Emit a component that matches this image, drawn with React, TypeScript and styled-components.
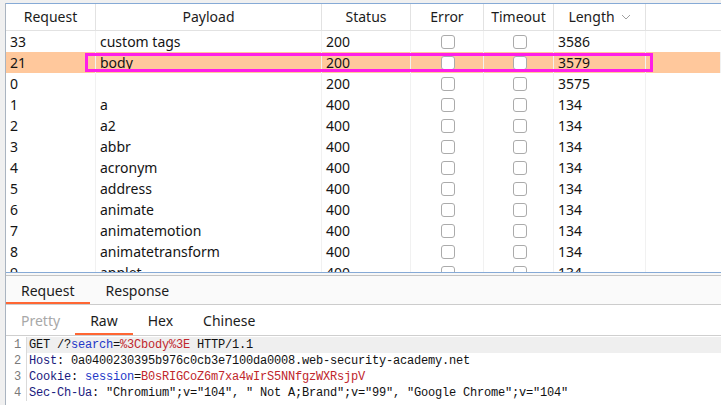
import React from "react";
import styled, { createGlobalStyle } from "styled-components";

const Global = createGlobalStyle`
  html, body { margin: 0; padding: 0; }
  body {
    background: #f0f0f0;
    font-family: "Noto Sans", "Liberation Sans", sans-serif;
    overflow: hidden;
  }
  * { box-sizing: border-box; }
`;

const Page = styled.div`
  width: 721px;
  height: 405px;
  padding: 3px 0 0 5px;
  display: flex;
  flex-direction: column;
`;

const Frame = styled.div`
  flex: 1;
  display: flex;
  flex-direction: column;
  border-left: 1px solid #aab4c0;
  background: #ffffff;
  min-height: 0;
`;

const TablePanel = styled.div`
  height: 270px;
  border-top: 1px solid #86aad6;
  border-bottom: 1px solid #86aad6;
  display: flex;
  flex-direction: column;
  overflow: hidden;
`;

const cols = "90px 226px 89px 73px 70px 92px 1fr";

const HeaderRow = styled.div`
  display: grid;
  grid-template-columns: ${cols};
  height: 27px;
  border-bottom: 1px solid #e2e2e2;
  flex-shrink: 0;
`;

const HeadCell = styled.div`
  border-right: 1px solid #e2e2e2;
  display: flex;
  align-items: center;
  justify-content: center;
  gap: 6px;
  font-size: 14px;
  color: #1c1c1c;
  line-height: 26px;
  &:last-child { border-right: none; }
`;

const Body = styled.div`
  flex: 1;
  overflow: hidden;
`;

const Row = styled.div<{ $hl?: boolean }>`
  position: relative;
  display: grid;
  grid-template-columns: ${cols};
  height: 21px;
  background: ${(p) => (p.$hl ? "#ffc89c" : "transparent")};
`;

const Cell = styled.div<{ $center?: boolean }>`
  border-right: 1px solid #f1f1f1;
  padding-left: 4px;
  font-size: 14px;
  line-height: 21px;
  color: #141414;
  white-space: nowrap;
  overflow: hidden;
  display: flex;
  align-items: center;
  justify-content: ${(p) => (p.$center ? "center" : "flex-start")};
  padding-left: ${(p) => (p.$center ? "0" : "4px")};
  &:last-child { border-right: none; }
`;

const Check = styled.span`
  display: inline-block;
  width: 14px;
  height: 14px;
  border: 1px solid #ababab;
  border-radius: 3px;
  background: #ffffff;
  margin-left: 2px;
`;

const Marker = styled.div`
  position: absolute;
  left: 79px;
  top: 1px;
  width: 568px;
  height: 19px;
  border: 3px solid #ff1ee8;
  pointer-events: none;
`;

const Gap = styled.div`
  height: 2px;
  background: #f7f7f7;
  flex-shrink: 0;
`;

const TabBar = styled.div`
  display: flex;
  height: 30px;
  background: #fafafa;
  border-top: 1px solid #c4c4c4;
  border-bottom: 1px solid #cccccc;
  flex-shrink: 0;
`;

const Tab = styled.div<{ $active?: boolean; $dim?: boolean; $pad: number }>`
  padding: 0 ${(p) => p.$pad}px;
  font-size: 14px;
  color: ${(p) => (p.$dim ? "#a8a8a8" : "#1c1c1c")};
  display: flex;
  align-items: center;
  border-bottom: 2px solid ${(p) => (p.$active ? "#ff6633" : "transparent")};
  padding-top: 2px;
`;

const SubBar = styled.div`
  display: flex;
  height: 31px;
  background: #ffffff;
  border-bottom: 1px solid #cfcfcf;
  flex-shrink: 0;
`;

const Code = styled.div`
  flex: 1;
  padding-top: 1px;
  font-family: "Liberation Mono", "DejaVu Sans Mono", monospace;
  font-size: 12px;
  letter-spacing: -0.2px;
  overflow: hidden;
`;

const Line = styled.div<{ $hl?: boolean }>`
  display: flex;
  height: 16px;
  line-height: 16px;
`;

const Num = styled.div`
  width: 21px;
  flex-shrink: 0;
  border-right: 1px solid #dadada;
  text-align: right;
  padding-right: 5px;
  color: #7a7a7a;
  background: #ffffff;
`;

const Text = styled.div<{ $hl?: boolean }>`
  flex: 1;
  padding-left: 2px;
  white-space: pre;
  color: #111111;
  background: ${(p) => (p.$hl ? "#efefef" : "#ffffff")};
`;

const HName = styled.span`color: #1a1a7e;`;
const PName = styled.span`color: #2438c8;`;
const PVal = styled.span`color: #c0262c;`;

const Chevron = () => (
  <svg width="10" height="6" viewBox="0 0 10 6">
    <path d="M1 1 L5 5 L9 1" fill="none" stroke="#a0a0a0" strokeWidth="1" />
  </svg>
);

const rows: [string, string, string, string][] = [
  ["33", "custom tags", "200", "3586"],
  ["21", "body", "200", "3579"],
  ["0", "", "200", "3575"],
  ["1", "a", "400", "134"],
  ["2", "a2", "400", "134"],
  ["3", "abbr", "400", "134"],
  ["4", "acronym", "400", "134"],
  ["5", "address", "400", "134"],
  ["6", "animate", "400", "134"],
  ["7", "animatemotion", "400", "134"],
  ["8", "animatetransform", "400", "134"],
  ["9", "applet", "400", "134"],
];

export default function App() {
  return (
    <>
      <Global />
      <Page>
        <Frame>
          <TablePanel>
            <HeaderRow>
              <HeadCell>Request</HeadCell>
              <HeadCell>Payload</HeadCell>
              <HeadCell>Status</HeadCell>
              <HeadCell>Error</HeadCell>
              <HeadCell>Timeout</HeadCell>
              <HeadCell>
                Length <Chevron />
              </HeadCell>
              <HeadCell />
            </HeaderRow>
            <Body>
              {rows.map((r, i) => (
                <Row key={i} $hl={i === 1}>
                  <Cell>{r[0]}</Cell>
                  <Cell>{r[1]}</Cell>
                  <Cell>{r[2]}</Cell>
                  <Cell $center>
                    <Check />
                  </Cell>
                  <Cell $center>
                    <Check />
                  </Cell>
                  <Cell>{r[3]}</Cell>
                  <Cell />
                  {i === 1 && <Marker />}
                </Row>
              ))}
            </Body>
          </TablePanel>
          <Gap />
          <TabBar>
            <Tab $active $pad={15}>Request</Tab>
            <Tab $pad={16}>Response</Tab>
          </TabBar>
          <SubBar>
            <Tab $dim $pad={15}>Pretty</Tab>
            <Tab $active $pad={15}>Raw</Tab>
            <Tab $pad={15}>Hex</Tab>
            <Tab $pad={15}>Chinese</Tab>
          </SubBar>
          <Code>
            <Line>
              <Num>1</Num>
              <Text $hl>
                GET /?<PName>search</PName>=<PVal>%3Cbody%3E</PVal> HTTP/1.1
              </Text>
            </Line>
            <Line>
              <Num>2</Num>
              <Text>
                <HName>Host</HName>: 0a0400230395b976c0cb3e7100da0008.web-security-academy.net
              </Text>
            </Line>
            <Line>
              <Num>3</Num>
              <Text>
                <HName>Cookie</HName>: <PName>session</PName>=<PVal>B0sRIGCoZ6m7xa4wIrS5NNfgzWXRsjpV</PVal>
              </Text>
            </Line>
            <Line>
              <Num>4</Num>
              <Text>
                <HName>Sec-Ch-Ua</HName>: "Chromium";v="104", " Not A;Brand";v="99", "Google Chrome";v="104"
              </Text>
            </Line>
          </Code>
        </Frame>
      </Page>
    </>
  );
}
